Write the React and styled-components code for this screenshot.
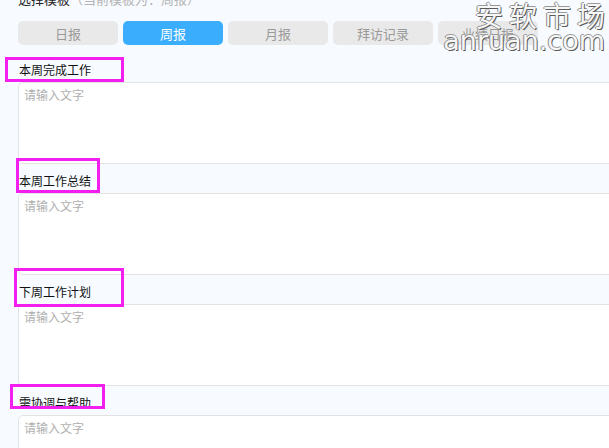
import React from "react";
import styled, { createGlobalStyle } from "styled-components";

const GlobalStyle = createGlobalStyle`
  html, body { margin: 0; padding: 0; }
  body {
    background: #f7fbff;
    overflow: hidden;
    font-family: "Noto Sans CJK SC", "Noto Sans", sans-serif;
  }
`;

const Page = styled.div`
  position: relative;
  width: 609px;
  height: 448px;
  overflow: hidden;
  padding-left: 18px;
  box-sizing: border-box;
`;

const Header = styled.div`
  margin-top: -9px;
  font-size: 13px;
  line-height: 16px;
  color: #222;
  white-space: nowrap;
`;

const Hint = styled.span`
  color: #b4b4b4;
`;

const Tabs = styled.div`
  display: flex;
  gap: 5px;
  margin-top: 14px;
`;

const Tab = styled.div`
  flex: 0 0 100px;
  height: 24px;
  border-radius: 5px;
  background: ${(p) => (p.$active ? "#3aaefd" : "#e9e9e9")};
  color: ${(p) => (p.$active ? "#ffffff" : "#9a9a9a")};
  font-size: 13px;
  display: flex;
  align-items: center;
  justify-content: center;
`;

const Label = styled.div`
  padding: ${(p) => p.$top}px 0 4px 1px;
  font-size: 12px;
  line-height: 16px;
  color: #111;
`;

const Area = styled.textarea`
  display: block;
  box-sizing: border-box;
  width: 610px;
  height: 82px;
  margin: 0;
  border: 1px solid #e2e2e2;
  border-radius: 5px;
  background: #fff;
  padding: 4px 5px;
  font-family: inherit;
  font-size: 12px;
  line-height: 16px;
  resize: none;
  outline: none;
  &::placeholder { color: #b0b0b0; }
`;

const Mark = styled.div`
  position: absolute;
  box-sizing: border-box;
  border: 3px solid #f21ff0;
  pointer-events: none;
`;

const Watermark = styled.div`
  position: absolute;
  right: 4px;
  top: 0;
  text-align: right;
  color: #f6f6f6;
  text-shadow: 1px 1px 0 #5a5a5a, -1px 0 0 #8a8a8a, 0 -1px 0 #9a9a9a;
  pointer-events: none;
`;

const WmTitle = styled.div`
  font-size: 28px;
  line-height: 30px;
  letter-spacing: 6px;
  margin-right: -6px;
  font-family: "Noto Sans CJK SC", sans-serif;
`;

const WmUrl = styled.div`
  font-size: 27px;
  line-height: 22px;
  font-family: "DejaVu Sans", sans-serif;
`;

const tabs = ["日报", "周报", "月报", "拜访记录", "业绩日报"];
const sections = [
  { title: "本周完成工作", top: 17 },
  { title: "本周工作总结", top: 9 },
  { title: "下周工作计划", top: 9 },
  { title: "需协调与帮助", top: 9 },
];
const marks = [
  { l: 5, t: 57, w: 119, h: 25 },
  { l: 16, t: 158, w: 84, h: 35 },
  { l: 14, t: 268, w: 110, h: 39 },
  { l: 10, t: 384, w: 95, h: 25 },
];

export default function App() {
  return (
    <>
      <GlobalStyle />
      <Page>
        <Header>
          选择模板<Hint>（当前模板为：周报）</Hint>
        </Header>
        <Tabs>
          {tabs.map((t) => (
            <Tab key={t} $active={t === "周报"}>{t}</Tab>
          ))}
        </Tabs>
        {sections.map((s) => (
          <React.Fragment key={s.title}>
            <Label $top={s.top}>{s.title}</Label>
            <Area placeholder="请输入文字" />
          </React.Fragment>
        ))}
        {marks.map((m, i) => (
          <Mark key={i} style={{ left: m.l, top: m.t, width: m.w, height: m.h }} />
        ))}
        <Watermark>
          <WmTitle>安软市场</WmTitle>
          <WmUrl>anruan.com</WmUrl>
        </Watermark>
      </Page>
    </>
  );
}
